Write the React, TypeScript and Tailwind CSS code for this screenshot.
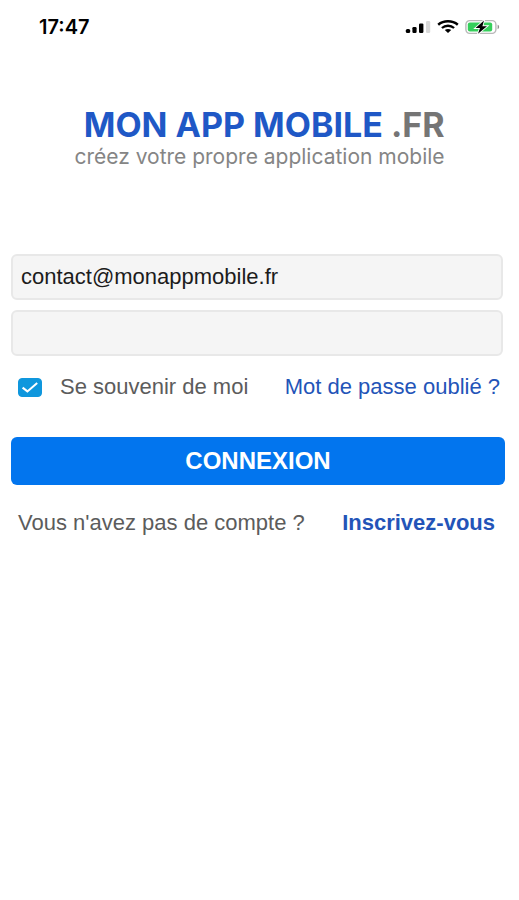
import { useState } from "react";

function SignalIcon() {
  return (
    <svg width="26" height="14" viewBox="0 0 26 14" aria-hidden="true">
      <rect x="0.8" y="9" width="4.4" height="4" rx="1.6" fill="#000" />
      <rect x="7.4" y="7" width="4.2" height="6" rx="1.2" fill="#000" />
      <rect x="14" y="3.4" width="4.4" height="9.6" rx="1.2" fill="#000" />
      <rect x="21" y="1" width="4.2" height="12" rx="1.2" fill="#d8d8d8" />
    </svg>
  );
}

function WifiIcon() {
  return (
    <svg width="22" height="14" viewBox="0 0 22 14" fill="none" stroke="#000" aria-hidden="true">
      <path d="M1.2 4.8C6.6 0.2 15.4 0.2 20.8 4.8" strokeWidth="2.5" />
      <path d="M4.9 8C8.3 5 13.7 5 17.1 8" strokeWidth="2.3" />
      <path d="M7.8 10.1C9.7 8.5 12.3 8.5 14.2 10.1L11 13Z" fill="#000" stroke="none" />
    </svg>
  );
}

function BatteryIcon() {
  return (
    <svg width="36" height="16" viewBox="0 0 36 16" aria-hidden="true">
      <rect x="0.9" y="1.6" width="30" height="12.8" rx="3.8" fill="#fff" stroke="#b8b8b8" strokeWidth="1.4" />
      <rect x="2.8" y="3.4" width="24.4" height="9.2" rx="2" fill="#35cf5b" />
      <path d="M32.6 5.8C34.6 6.4 34.6 9.6 32.6 10.2Z" fill="#8f8f8f" />
      <path
        d="M19 1.4L10.6 9H15L13 14.8L22 7.2H17.4Z"
        fill="#000"
        stroke="#fff"
        strokeWidth="1.8"
        paintOrder="stroke"
      />
    </svg>
  );
}

function StatusBar() {
  return (
    <div className="flex h-[53px] items-center justify-between pl-[39px] pr-[18px]">
      <span className="font-['Inter',sans-serif] text-xl font-semibold text-black">17:47</span>
      <div className="flex items-center gap-[6px]">
        <SignalIcon />
        <WifiIcon />
        <BatteryIcon />
      </div>
    </div>
  );
}

export default function App() {
  const [email, setEmail] = useState("contact@monappmobile.fr");
  const [password, setPassword] = useState("");
  const [remember, setRemember] = useState(true);

  return (
    <div className="min-h-screen bg-white font-['Liberation_Sans',Arial,sans-serif] text-[22px] text-[#5c5c5c]">
      <StatusBar />

      {/* Brand */}
      <header className="flex flex-col items-center pt-14 font-['Inter',sans-serif]">
        <div className="flex flex-col items-end gap-1">
          <h1 className="whitespace-nowrap text-[34px] leading-8 font-bold text-[#1f58c6]">
            MON APP MOBILE <span className="text-[#757575]">.FR</span>
          </h1>
          <p className="whitespace-nowrap text-[21px] leading-6 text-[#858585]">
            créez votre propre application mobile
          </p>
        </div>
      </header>

      <form className="pt-[85px] pr-[14px] pl-[11px]" onSubmit={(e) => e.preventDefault()}>
        <div className="flex flex-col gap-[10px] pr-[2px]">
          <input
            type="email"
            aria-label="Adresse e-mail"
            value={email}
            onChange={(e) => setEmail(e.target.value)}
            className="h-[46px] w-full rounded-md border-2 border-[#e8e8e8] bg-[#f5f5f5] px-2 text-[#1c1c1c] outline-none"
          />
          <input
            type="password"
            aria-label="Mot de passe"
            value={password}
            onChange={(e) => setPassword(e.target.value)}
            className="h-[46px] w-full rounded-md border-2 border-[#e8e8e8] bg-[#f5f5f5] px-2 text-[#1c1c1c] outline-none"
          />
        </div>

        <div className="flex items-center justify-between pt-[17px] pr-[5px] pl-[7px]">
          <label className="flex items-center gap-[18px]">
            <span className="relative flex">
              <input
                type="checkbox"
                checked={remember}
                onChange={(e) => setRemember(e.target.checked)}
                className="h-[19px] w-6 appearance-none rounded border border-[#0f97dd] checked:bg-[#0f97dd]"
              />
              {remember && (
                <svg
                  className="pointer-events-none absolute inset-0"
                  width="24"
                  height="19"
                  viewBox="0 0 24 19"
                  fill="none"
                >
                  <path d="M4.6 9.6L9.4 13.4L19.2 5" stroke="#fff" strokeWidth="2" />
                </svg>
              )}
            </span>
            <span className="leading-7">Se souvenir de moi</span>
          </label>
          <a href="#" className="leading-7 text-[#2354b8]">
            Mot de passe oublié ?
          </a>
        </div>

        <button
          type="submit"
          className="mt-9 h-12 w-full rounded-md bg-[#0275ee] text-2xl font-bold text-white"
        >
          CONNEXION
        </button>

        <div className="flex items-center justify-between pt-6 pr-[10px] pl-[7px]">
          <span className="leading-7">Vous n'avez pas de compte ?</span>
          <a href="#" className="leading-7 font-bold text-[#2354b8]">
            Inscrivez-vous
          </a>
        </div>
      </form>
    </div>
  );
}
